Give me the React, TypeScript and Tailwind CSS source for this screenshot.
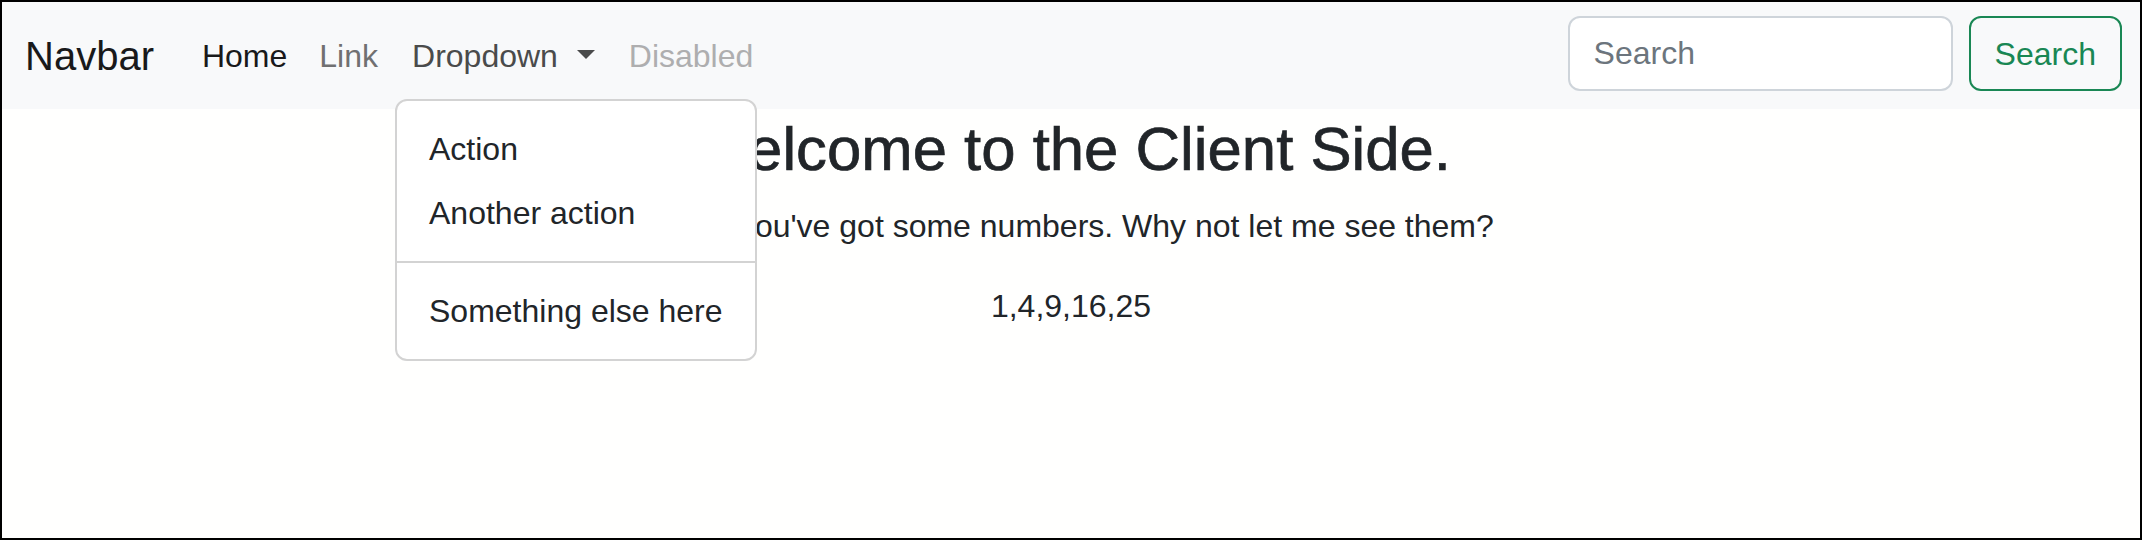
import React from "react";

const menuItems = ["Action", "Another action"];

export default function App() {
  return (
    <div className="relative w-[2142px] h-[540px] overflow-hidden border-2 border-black bg-[#fffffe] font-['Liberation_Sans',Arial,sans-serif] text-[#212529]">
      <nav className="flex items-center h-[107px] bg-[#f8f9fa] pl-[23px] pr-[18px]">
        <a className="text-[40px] leading-[56px] text-[#19191a] mr-[32px]">Navbar</a>
        <ul className="flex items-center text-[32px] leading-[48px]">
          <li>
            <a className="block px-4 text-[#19191a]">Home</a>
          </li>
          <li>
            <a className="block px-4 text-[#707071]">Link</a>
          </li>
          <li>
            <a className="block pl-[18px] pr-4 text-[#4a4b4b]">
              Dropdown{" "}
              <span className="inline-block ml-[10px] align-[8px] w-0 h-0 border-t-[9.6px] border-x-[9.6px] border-t-[#4a4b4b] border-x-transparent" />
            </a>
          </li>
          <li>
            <a className="block pl-[18px] pr-4 text-[#aeaeaf]">Disabled</a>
          </li>
        </ul>

        <form className="ml-auto flex mb-[4px]" onSubmit={(e) => e.preventDefault()}>
          <input
            type="search"
            placeholder="Search"
            className="w-[385px] h-[75px] rounded-[12px] border-2 border-[#ced4da] bg-white px-6 text-[32px] text-[#212529] placeholder:text-[#6c757d] outline-none"
          />
          <button
            type="submit"
            className="ml-4 h-[75px] rounded-[12px] border-2 border-[#198754] px-6 text-[32px] text-[#198754]"
          >
            Search
          </button>
        </form>
      </nav>

      {/* open dropdown menu */}
      <div className="absolute left-[393px] top-[97px] z-10 w-[362px] rounded-[12px] border-2 border-[#d3d3d3] bg-white py-4 text-[32px] leading-[48px]">
        {menuItems.map((item) => (
          <a key={item} className="block px-8 py-2 text-[#212529]">
            {item}
          </a>
        ))}
        <hr className="my-4 border-t-2 border-[#d3d3d3]" />
        <a className="block px-8 py-2 text-[#212529]">Something else here</a>
      </div>

      <main className="pt-[3px] text-center">
        <h2 className="mb-4 text-[61.7px] leading-[1.2] font-medium [-webkit-text-stroke:0.7px_#212529]">
          Welcome to the Client Side.
        </h2>
        <p className="mb-8 text-[32px] leading-[48px]">
          Hello, you've got some numbers. Why not let me see them?
        </p>
        <div className="text-[32px] leading-[48px]">1,4,9,16,25</div>
      </main>
    </div>
  );
}
